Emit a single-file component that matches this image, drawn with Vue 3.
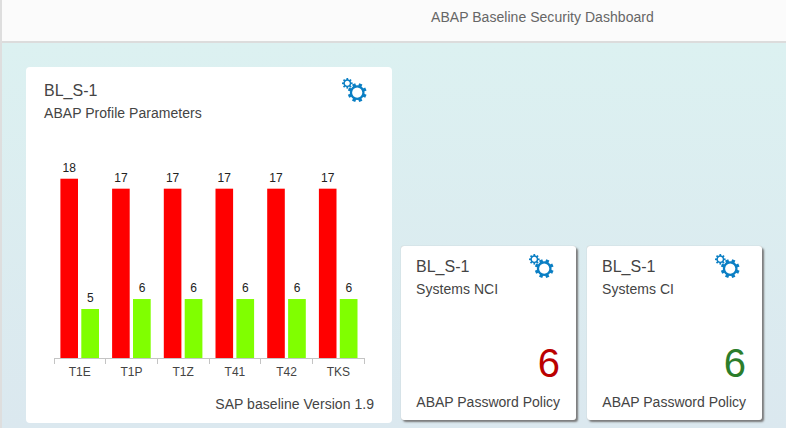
<script setup>
import { h } from 'vue'

const categories = [
  { name: 'T1E', failed: 18, passed: 5 },
  { name: 'T1P', failed: 17, passed: 6 },
  { name: 'T1Z', failed: 17, passed: 6 },
  { name: 'T41', failed: 17, passed: 6 },
  { name: 'T42', failed: 17, passed: 6 },
  { name: 'TKS', failed: 17, passed: 6 },
]

const step = 51.7
const unit = 9.96
const baseline = 208

const tiles = [
  { title: 'BL_S-1', subtitle: 'Systems NCI', value: 6, state: 'error', footer: 'ABAP Password Policy' },
  { title: 'BL_S-1', subtitle: 'Systems CI', value: 6, state: 'good', footer: 'ABAP Password Policy' },
]

const angles = [0, 45, 90, 135, 180, 225, 270, 315]

function gear(cx, cy, outer, radius, stroke, tooth, turn) {
  return h('g', { transform: `translate(${cx} ${cy}) rotate(${turn})` }, [
    h('circle', { r: radius, fill: 'none', stroke: '#0b7fc4', 'stroke-width': stroke }),
    ...angles.map((a) =>
      h('rect', {
        x: -tooth / 2,
        y: -outer,
        width: tooth,
        height: outer - radius,
        fill: '#0b7fc4',
        transform: `rotate(${a})`,
      })
    ),
  ])
}

const GearsIcon = () =>
  h('svg', { width: 26, height: 26, viewBox: '0 0 26 26' }, [
    gear(6.3, 6.3, 5.3, 3.2, 1.5, 1.7, 0),
    gear(16.2, 15.6, 9.4, 6.2, 2.2, 3.4, 22.5),
  ])
</script>

<template>
  <div class="page">
    <header class="header"><span>ABAP Baseline Security Dashboard</span></header>
    <main class="board">
      <section class="card chart-card">
        <div class="card-head">
          <div>
            <div class="title">BL_S-1</div>
            <div class="subtitle">ABAP Profile Parameters</div>
          </div>
          <GearsIcon class="gears" />
        </div>
        <svg class="chart" width="366" height="235" viewBox="0 0 366 235">
          <g v-for="(c, i) in categories" :key="c.name">
            <rect class="failed" :x="34.4 + i * step" :y="baseline - c.failed * unit" width="17.6" :height="c.failed * unit" />
            <rect class="passed" :x="55.3 + i * step" :y="baseline - c.passed * unit + 0.8" width="17.7" :height="c.passed * unit - 0.8" />
            <text class="value" :x="43.2 + i * step" :y="baseline - c.failed * unit - 6.7">{{ c.failed }}</text>
            <text class="value" :x="64.3 + i * step" :y="baseline - c.passed * unit - 6">{{ c.passed }}</text>
            <text class="label" :x="53.8 + i * step" y="226">{{ c.name }}</text>
          </g>
          <path class="axis" d="M28 208.5H339" />
          <path v-for="n in 7" :key="n" class="axis" :d="`M${Math.floor(28 + (n - 1) * step) + 0.5} 208V214`" />
        </svg>
        <div class="chart-foot">SAP baseline Version 1.9</div>
      </section>
      <section v-for="t in tiles" :key="t.subtitle" class="card tile">
        <div class="card-head">
          <div>
            <div class="title">{{ t.title }}</div>
            <div class="subtitle">{{ t.subtitle }}</div>
          </div>
          <GearsIcon class="gears" />
        </div>
        <div class="number" :class="t.state">{{ t.value }}</div>
        <div class="tile-foot">{{ t.footer }}</div>
      </section>
    </main>
  </div>
</template>

<style>
body {
  background: #fff;
}
</style>

<style scoped>
.page {
  box-sizing: border-box;
  width: 786px;
  height: 428px;
  overflow: hidden;
  display: flex;
  flex-direction: column;
  border-left: 2px solid #dedede;
  font-family: "Liberation Sans", Arial, sans-serif;
  color: #444;
}
.header {
  box-sizing: border-box;
  height: 43px;
  flex: none;
  padding: 9px 0 0 429px;
  background: #fbfbfb;
  border-bottom: 2px solid #dcdcdc;
  font-size: 14px;
  line-height: 16px;
  letter-spacing: 0.04px;
  color: #666;
}
.board {
  flex: 1;
  display: flex;
  align-items: flex-start;
  padding: 24px 0 0 24px;
  background: linear-gradient(#dcf1f1, #dbe8ef);
}
.card {
  flex: none;
  box-sizing: border-box;
  background: #fff;
  border-radius: 3px;
}
.chart-card {
  width: 366px;
  height: 356px;
  border-radius: 4px;
}
.card-head {
  display: flex;
  justify-content: space-between;
  padding: 10px 25px 0 18px;
}
.title {
  margin-top: 5px;
  font-size: 16px;
  line-height: 18px;
}
.subtitle {
  margin-top: 5px;
  font-size: 14px;
  line-height: 16px;
  letter-spacing: 0.04px;
  white-space: nowrap;
}
.gears {
  flex: none;
}
.chart {
  display: block;
  margin-top: 29px;
}
.chart text {
  font-size: 12px;
  text-anchor: middle;
}
.value {
  fill: #222;
}
.label {
  fill: #444;
}
.failed {
  fill: #f00;
}
.passed {
  fill: #80ff00;
}
.axis {
  fill: none;
  stroke: #c4c4c4;
}
.chart-foot {
  margin-top: 11px;
  padding-right: 18px;
  text-align: right;
  font-size: 14px;
  line-height: 16px;
  letter-spacing: 0.04px;
}
.tile {
  width: 175px;
  height: 174px;
  margin: 179px 0 0 9px;
  box-shadow: 0 0 1px #aaa, 2px 2px 2px #777;
}
.tile + .tile {
  margin-left: 11px;
}
.tile .card-head {
  padding: 7px 22.5px 0 15px;
}
.number {
  margin-top: 43px;
  padding-right: 16px;
  text-align: right;
  font-size: 40px;
  line-height: 46px;
}
.error {
  color: #b00;
}
.good {
  color: #2b7d2b;
}
.tile-foot {
  margin-top: 8px;
  padding-right: 16px;
  text-align: right;
  font-size: 14px;
  line-height: 16px;
}
</style>
